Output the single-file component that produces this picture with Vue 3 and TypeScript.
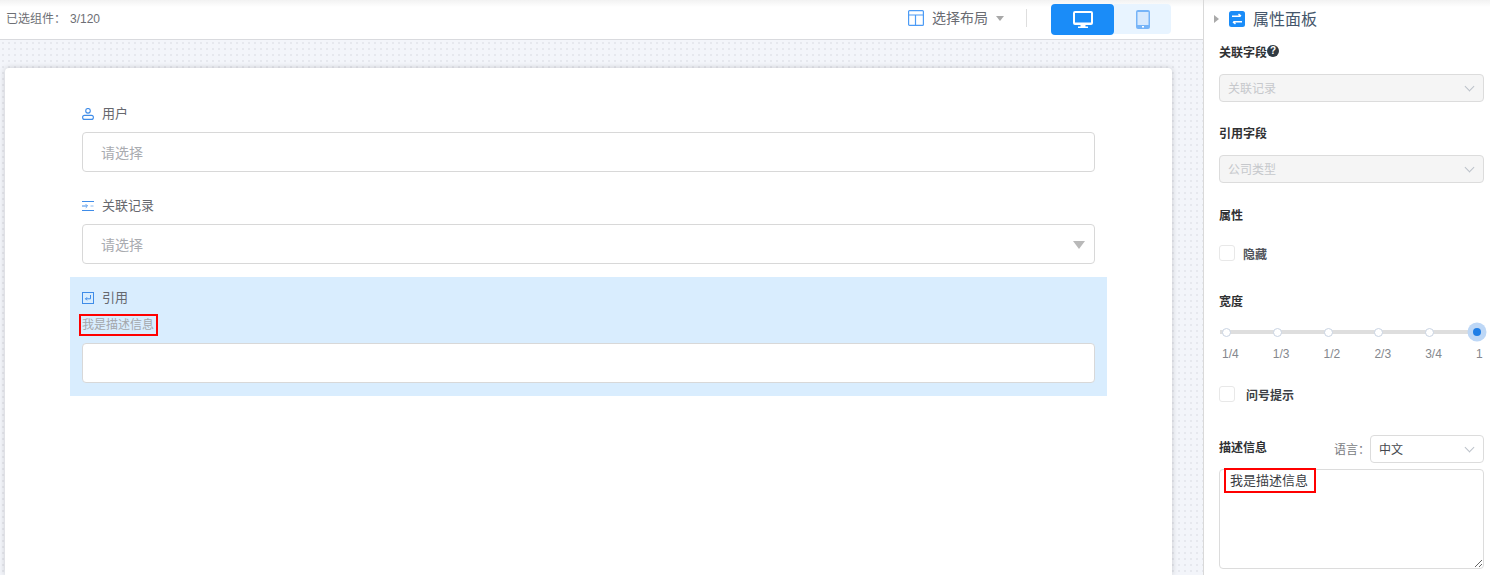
<script setup lang="ts">
const stops = ['1/4', '1/3', '1/2', '2/3', '3/4', '1']
</script>

<template>
  <div class="app">
    <main class="main">
      <header class="topbar">
        <div class="count"><span>已选组件：</span><span class="num">3/120</span></div>
        <div class="top-right">
          <svg class="layout-ic" width="16" height="16" viewBox="0 0 16 16" fill="none" stroke="#4c9bf5" stroke-width="1.2">
            <rect x=".6" y=".6" width="14.8" height="14.8" rx="1" />
            <path d="M.6 5h14.8M7.500 5v10.400" />
          </svg>
          <span class="layout-text">选择布局</span>
          <i class="tri small"></i>
          <span class="divider"></span>
          <div class="device">
            <button class="dev on">
              <svg width="20" height="18" viewBox="0 0 20 18">
                <path fill="#fff" fill-rule="evenodd" d="M2 0h16a2 2 0 0 1 2 2v10a2 2 0 0 1-2 2h-5.500v1.500H15V17H5v-1.500h2.500V14H2a2 2 0 0 1-2-2V2a2 2 0 0 1 2-2zm0 2v9.500h16V2z" />
              </svg>
            </button>
            <button class="dev">
              <svg width="14" height="19" viewBox="0 0 14 19">
                <rect width="14" height="19" rx="2" fill="#76b4f8" />
                <rect x="1.500" y="2" width="11" height="13" fill="#d7e9fd" />
                <rect x="6" y="16" width="2" height="1.500" fill="#fff" />
              </svg>
            </button>
          </div>
        </div>
      </header>

      <section class="canvas">
        <div class="card">
          <div class="field">
            <div class="label">
              <svg width="12" height="12" viewBox="0 0 12 12" fill="none" stroke="#3f8ce8" stroke-width="1.100">
                <circle cx="6" cy="2.800" r="2.300" />
                <rect x=".6" y="7.400" width="10.800" height="4" rx="2" />
              </svg>
              <span>用户</span>
            </div>
            <div class="input"><span class="ph">请选择</span></div>
          </div>
          <div class="field">
            <div class="label">
              <svg width="12" height="12" viewBox="0 0 12 12" fill="none" stroke="#3f8ce8" stroke-width="1">
                <path d="M0 1.500h12M0 10.500h12M0 6h4.500" />
                <path d="M3.800 4.300 5.500 6 3.800 7.700" />
                <path d="M8.500 6h3" stroke="#8dbcf2" />
              </svg>
              <span>关联记录</span>
            </div>
            <div class="input"><span class="ph">请选择</span><i class="tri big"></i></div>
          </div>
          <div class="field selected">
            <div class="label">
              <svg width="12" height="12" viewBox="0 0 12 12" fill="none" stroke="#3f8ce8" stroke-width="1">
                <rect x=".5" y=".5" width="11" height="11" />
                <path d="M8.500 3v3.800H3.500M5 5.300 3.500 6.800 5 8.300" />
              </svg>
              <span>引用</span>
            </div>
            <div class="desc">我是描述信息</div>
            <div class="input"></div>
          </div>
        </div>
      </section>
    </main>

    <aside class="panel">
      <div class="title">
        <i class="tri-right"></i>
        <svg width="16" height="16" viewBox="0 0 16 16">
          <rect width="16" height="16" rx="2.500" fill="#1a8cf8" />
          <path d="M3 5.200h8.500M9.500 3.200l2.500 2M13 10.800H4.500M6.500 12.800l-2.500-2" stroke="#fff" stroke-width="1.500" fill="none" />
        </svg>
        <span>属性面板</span>
      </div>

      <div class="plabel first">关联字段<span class="help">?</span></div>
      <div class="psel disabled"><span>关联记录</span><i class="chev"></i></div>

      <div class="plabel gap21">引用字段</div>
      <div class="psel disabled"><span>公司类型</span><i class="chev"></i></div>

      <div class="plabel gap22">属性</div>
      <label class="check hide-row"><i class="box"></i><span>隐藏</span></label>

      <div class="plabel gap30">宽度</div>
      <div class="stops">
        <span v-for="(s, i) in stops" :key="s" class="stop" :class="{ active: i === 5 }"></span>
      </div>
      <div class="marks"><span v-for="s in stops" :key="s">{{ s }}</span></div>

      <label class="check help-row"><i class="box"></i><span>问号提示</span></label>

      <div class="desc-head">
        <span class="plabel">描述信息</span>
        <span class="lang">语言：</span>
        <div class="psel lang-sel"><span>中文</span><i class="chev"></i></div>
      </div>
      <div class="ta-wrap">
        <textarea class="ta" readonly>我是描述信息</textarea>
        <span class="mark"></span>
      </div>
    </aside>
  </div>
</template>

<style>
html, body { margin: 0; padding: 0; overflow: hidden; background: #fff; }
</style>

<style scoped>
.app {
  display: flex;
  width: 1490px;
  height: 575px;
  overflow: hidden;
  font-family: "Liberation Sans", "Noto Sans CJK SC", sans-serif;
  font-size: 12px;
  color: #606266;
}
.main {
  width: 1203px;
  height: 575px;
  display: flex;
  flex-direction: column;
  border-right: 1px solid #d9d9d9;
  flex: none;
}
.topbar {
  height: 39px;
  flex: none;
  border-bottom: 1px solid #d9dade;
  background: linear-gradient(#f2f2f2, #fff 7px);
  display: flex;
  align-items: center;
  justify-content: space-between;
  padding-left: 6px;
}
.count { display: flex; align-items: baseline; color: #6d6f75; margin-top: -5px; }
.num { margin-left: 4px; }
.top-right { display: flex; align-items: center; height: 39px; }
.layout-ic { margin-right: 8px; margin-top: -3px; }
.layout-text { font-size: 14px; color: #6a6c72; width: 56px; margin-top: -5px; }
.tri { display: block; width: 0; height: 0; border-style: solid; border-color: #a8a8a8 transparent transparent; }
.tri.small { border-width: 5px 4.500px 0; margin: -3px 0 0 8px; }
.divider { width: 1px; height: 18px; background: #dedede; margin: -3px 24px 0 22px; }
.device { display: flex; width: 120px; margin: 0 32px 0 0; align-self: flex-start; padding-top: 4px; }
.dev {
  border: 0;
  padding: 0;
  display: flex;
  align-items: center;
  justify-content: center;
  height: 30px;
  width: 57px;
  background: #e8f4ff;
  border-radius: 0 4px 4px 0;
}
.dev.on { width: 63px; height: 31px; background: #1a8cf8; border-radius: 4px; }
.canvas {
  flex: 1;
  min-height: 0;
  padding: 28px 31px 0 5px;
  background-color: #f3f5fa;
  background-image: radial-gradient(#e6e8ee 1px, transparent 1.200px);
  background-size: 6px 6px;
}
.card {
  height: 100%;
  background: #fff;
  border-radius: 4px 4px 0 0;
  box-shadow: 0 0 6px rgba(0, 0, 0, .18);
  padding: 25px 65px 0;
  box-sizing: border-box;
}
.field { padding: 11px 12px 13px; }
.field.selected { background: #d9edfe; }
.label {
  display: flex;
  align-items: center;
  height: 20px;
  font-size: 13px;
  color: #66686e;
  margin-bottom: 8px;
}
.label span { position: relative; top: -1.500px; }
.label svg { margin-right: 8px; }
.selected .label { margin-bottom: 6px; }
.input {
  height: 38px;
  border: 1px solid #d8d8d8;
  border-radius: 4px;
  background: #fff;
  display: flex;
  align-items: center;
  justify-content: space-between;
  padding: 0 9px 0 18px;
}
.ph { font-size: 14px; color: #a9abb0; position: relative; top: -.5px; }
.tri.big { border-width: 8px 6.500px 0; border-top-color: #b9b9b9; margin-top: 1px; }
.desc {
  width: fit-content;
  margin: 0 0 7px -3px;
  border: 2px solid #f00;
  padding: 0 2px 0 1px;
  height: 18px;
  line-height: 18px;
  color: #a3a6ab;
}

.panel {
  flex: none;
  width: 286px;
  box-sizing: border-box;
  padding: 0 6px 0 15px;
  background: linear-gradient(#f2f2f2, #fff 7px);
  display: flex;
  flex-direction: column;
}
.title {
  height: 38px;
  display: flex;
  align-items: center;
  font-size: 16px;
  color: #45566b;
}
.tri-right {
  width: 0;
  height: 0;
  border-style: solid;
  border-width: 4.500px 0 4.500px 5px;
  border-color: transparent transparent transparent #a9a9a9;
  margin: 0 10px 0 -5px;
}
.title span { margin-left: 8px; position: relative; top: -1px; }
.plabel {
  display: flex;
  align-items: center;
  height: 20px;
  box-sizing: border-box;
  padding-bottom: 2px;
  font-weight: 700;
  color: #303133;
  flex: none;
}
.first { margin-top: 4px; }
.gap21 { margin-top: 21px; }
.gap22 { margin-top: 22px; }
.gap30 { margin-top: 30px; }
.help {
  width: 12px;
  height: 12px;
  border-radius: 50%;
  background: #303a42;
  color: #fff;
  font-size: 10px;
  line-height: 12px;
  text-align: center;
}
.psel {
  height: 26px;
  box-sizing: content-box;
  border: 1px solid #dcdcdc;
  border-radius: 4px;
  display: flex;
  align-items: center;
  justify-content: space-between;
  padding: 0 9px 0 8px;
  margin-top: 12px;
  flex: none;
  color: #44474d;
}
.psel span { position: relative; top: -1px; }
.psel.disabled { background: #f5f5f5; color: #c6c8cc; }
.chev {
  width: 6px;
  height: 6px;
  border-right: 1px solid #bcc2ca;
  border-bottom: 1px solid #bcc2ca;
  transform: rotate(45deg);
  margin: -4px 1px 0 0;
}
.check { display: flex; align-items: center; height: 16px; color: #50535a; font-weight: 700; }
.box {
  width: 14px;
  height: 14px;
  border: 1px solid #e8e8e8;
  border-radius: 3px;
  background: #fff;
  flex: none;
}
.hide-row { margin-top: 20px; }
.hide-row span { margin-left: 8px; }
.help-row { margin-top: 23px; color: #3c3f45; }
.help-row span { margin-left: 11px; }
.stops {
  margin: 15px 0 0 1px;
  display: grid;
  grid-template-columns: repeat(5, 50.800px) 12px;
  height: 12px;
  width: 266px;
  background: linear-gradient(#dedede, #dedede) 0 4px / 256px 4px no-repeat;
}
.stop {
  width: 7px;
  height: 7px;
  margin: 1.500px 0 0 2px;
  border: 1px solid #c9d3e2;
  border-radius: 50%;
  background: #fff;
}
.stop.active {
  width: 8px;
  height: 8px;
  margin: 2px 0 0 -1px;
  border: 0;
  background: #1f7ee6;
  box-shadow: 0 0 0 5.500px #bdd7f6;
  align-self: start;
}
.marks {
  margin: 7px 0 0 3px;
  height: 18px;
  line-height: 18px;
  display: grid;
  grid-template-columns: repeat(5, 50.800px) 10px;
  width: 264px;
  color: #84878d;
}
.desc-head { display: flex; align-items: center; margin-top: 33px; height: 28px; flex: none; }
.desc-head .plabel { position: relative; top: -2px; }
.lang { margin-left: auto; color: #797c82; position: relative; top: -1px; }
.lang-sel { width: 95px; margin-top: 0; }
.ta-wrap { position: relative; margin-top: 6px; height: 100px; width: 265px; flex: none; }
.ta {
  display: block;
  width: 100%;
  height: 100%;
  box-sizing: border-box;
  border: 1px solid #dcdcdc;
  border-radius: 4px;
  padding: 1px 10px;
  font: 13px/20px "Liberation Sans", "Noto Sans CJK SC", sans-serif;
  color: #3b3e44;
  outline: none;
  resize: vertical;
}
.mark {
  position: absolute;
  left: 5px;
  top: -1px;
  width: 88px;
  height: 21px;
  border: 2px solid #f00;
  pointer-events: none;
}
</style>
